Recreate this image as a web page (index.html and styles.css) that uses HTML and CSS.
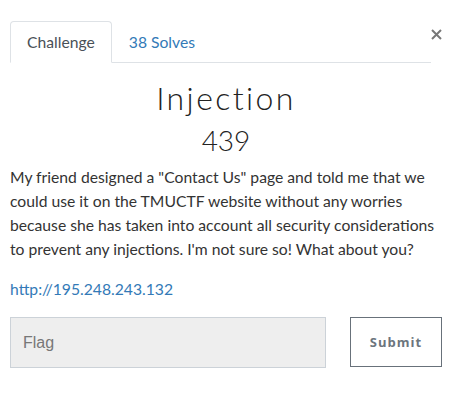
FILE: index.html
```html
<!DOCTYPE html>
<html lang="en">
<head>
  <meta charset="UTF-8" />
  <title>Injection</title>
  <link rel="stylesheet" href="styles.css">
</head>
<body>

  <!-- Challenge modal -->
  <div class="modal">
    <div class="tabs-row">
      <ul class="tabs">
        <li class="tab active">Challenge</li>
        <li class="tab"><a href="#">38 Solves</a></li>
      </ul>
      <button class="close" type="button" aria-label="Close">
        <svg width="11" height="11" viewBox="0 0 11 11"><path d="M1 1L10 10M10 1L1 10" stroke="#777" stroke-width="2"/></svg>
      </button>
    </div>

    <h2 class="chal-name">Injection</h2>
    <h3 class="chal-value">439</h3>

    <p class="chal-desc">My friend designed a "Contact Us" page and told me that we could use it on the TMUCTF website without any worries because she has taken into account all security considerations to prevent any injections. I'm not sure so! What about you?</p>
    <p class="chal-link"><a href="#">http://195.248.243.132</a></p>

    <form class="submit-row">
      <input type="text" class="flag-input" placeholder="Flag" />
      <button type="submit" class="submit-btn">Submit</button>
    </form>
  </div>

</body>
</html>
```

FILE: styles.css
```css
body {
  margin: 0;
  background: #fff;
  font-family: Lato, "Open Sans", sans-serif;
  color: #333;
}
.modal {
  padding: 21px 22px 0 10px;
}
.tabs-row {
  display: flex;
  align-items: flex-start;
}
.tabs {
  flex: 1;
  display: flex;
  list-style: none;
  margin: 0 12px 0 0;
  padding: 0;
  border-bottom: 1px solid #dee2e6;
}
.tab {
  padding: 8px 16px;
  font-size: 15.7px;
  line-height: 24px;
  border: 1px solid transparent;
  border-top-left-radius: 4px;
  border-top-right-radius: 4px;
  margin-bottom: -1px;
}
.tab.active {
  color: #495057;
  border-color: #dee2e6 #dee2e6 #fff;
}
.tab a {
  color: #337ab7;
  text-decoration: none;
}
.close {
  display: flex;
  background: none;
  border: none;
  padding: 0;
  margin: 8px 0 0 -12px;
  cursor: pointer;
}
.chal-name {
  margin: 17px 0 0;
  text-align: center;
  font-size: 32px;
  line-height: 36px;
  font-weight: 300;
  letter-spacing: 2.4px;
  color: #222;
}
.chal-value {
  margin: 8px 0 0;
  text-align: center;
  font-size: 28px;
  line-height: 32px;
  font-weight: 300;
  color: #222;
}
.chal-desc {
  margin: 9px 0 0;
  font-size: 15.7px;
  line-height: 24px;
}
.chal-link {
  margin: 16px 0 0;
  font-size: 15.7px;
  line-height: 24px;
}
.chal-link a {
  color: #337ab7;
  text-decoration: none;
}
.submit-row {
  display: flex;
  align-items: flex-start;
  gap: 24px;
  margin-top: 16px;
}
.flag-input {
  width: 316px;
  height: 51px;
  box-sizing: border-box;
  padding: 0 12px;
  background: #eee;
  border: 1px solid #ccd2d8;
  font-family: "Liberation Sans", Arial, sans-serif;
  font-size: 16px;
  color: #333;
}
.flag-input::placeholder {
  color: #777;
}
.submit-btn {
  width: 92px;
  height: 50px;
  background: #fff;
  border: 1px solid #68717a;
  font-family: "Open Sans", sans-serif;
  font-weight: bold;
  font-size: 13px;
  letter-spacing: 1px;
  color: #6c757d;
  cursor: pointer;
}
```
